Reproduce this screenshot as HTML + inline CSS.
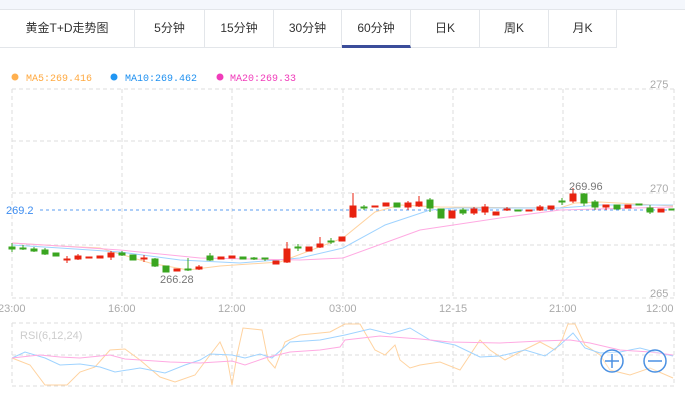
<!DOCTYPE html>
<html><head><meta charset="utf-8"><style>
body{margin:0;width:685px;height:403px;background:#fff;overflow:hidden;font-family:"Liberation Sans","Noto Sans CJK SC",sans-serif}
.top{position:absolute;left:0;top:0;width:685px;height:9px;background:#f4f7fc;border-bottom:1px solid #e3e6ea}
.tabs{position:absolute;left:0;top:10px;height:37px;width:617px;border-bottom:1px solid #e3e6ea}
.tab{position:absolute;top:0;height:37px;line-height:37px;text-align:center;font-size:12px;color:#333;border-right:1px solid #e3e6ea;box-sizing:border-box}
.act{border-bottom:3px solid #3b4d9a;height:38px}
svg{position:absolute;left:0;top:0}
</style></head><body>
<div class="top"></div>
<div class="tabs">
<div class="tab" style="left:0;width:135px">黄金T+D走势图</div>
<div class="tab" style="left:135px;width:70px">5分钟</div>
<div class="tab" style="left:205px;width:69px">15分钟</div>
<div class="tab" style="left:274px;width:68px">30分钟</div>
<div class="tab act" style="left:342px;width:69px">60分钟</div>
<div class="tab" style="left:411px;width:69px">日K</div>
<div class="tab" style="left:480px;width:69px">周K</div>
<div class="tab" style="left:549px;width:68px">月K</div>
</div>
<svg width="685" height="403" viewBox="0 0 685 403">
<g font-family="Liberation Mono, monospace" font-size="10">
<circle cx="15" cy="77" r="3.5" fill="#ffb04f"/><text x="26" y="81" fill="#ffa940">MA5:269.416</text>
<circle cx="114" cy="77" r="3.5" fill="#2196f3"/><text x="125" y="81" fill="#1e90f0">MA10:269.462</text>
<circle cx="220" cy="77" r="3.5" fill="#f03cba"/><text x="230" y="81" fill="#f03cba">MA20:269.33</text>
</g>
<g stroke="#ddd" stroke-dasharray="4,3" fill="none" stroke-width="1">
<line x1="12" y1="89" x2="674" y2="89"/><line x1="12" y1="141" x2="674" y2="141"/><line x1="12" y1="193" x2="674" y2="193"/><line x1="12" y1="245" x2="674" y2="245"/><line x1="12" y1="298" x2="674" y2="298"/>
<line x1="12" y1="89" x2="12" y2="298"/><line x1="122" y1="89" x2="122" y2="298"/><line x1="232" y1="89" x2="232" y2="298"/><line x1="343" y1="89" x2="343" y2="298"/><line x1="453" y1="89" x2="453" y2="298"/><line x1="563" y1="89" x2="563" y2="298"/><line x1="674" y1="89" x2="674" y2="298"/>
<line x1="12" y1="323" x2="674" y2="323"/><line x1="12" y1="355" x2="674" y2="355"/><line x1="12" y1="386" x2="674" y2="386"/>
<line x1="12" y1="323" x2="12" y2="386"/><line x1="122" y1="323" x2="122" y2="386"/><line x1="232" y1="323" x2="232" y2="386"/><line x1="343" y1="323" x2="343" y2="386"/><line x1="453" y1="323" x2="453" y2="386"/><line x1="563" y1="323" x2="563" y2="386"/><line x1="674" y1="323" x2="674" y2="386"/>
</g>
<g font-size="11" fill="#aaa" font-family="Liberation Sans, sans-serif">
<text x="650" y="88">275</text><text x="650" y="192">270</text><text x="650" y="297">265</text>
<text x="-2" y="312">23:00</text><text x="108" y="312">16:00</text><text x="218" y="312">12:00</text><text x="329" y="312">03:00</text><text x="439" y="312">12-15</text><text x="549" y="312">21:00</text><text x="646" y="312">12:00</text>
<text x="20" y="339" fill="#ccc">RSI(6,12,24)</text>
</g>
<line x1="40" y1="210" x2="674" y2="210" stroke="#5b9cf0" stroke-dasharray="3,3"/>
<text x="6" y="214" font-size="11" fill="#3c8cf0">269.2</text>
<g fill="none" stroke-width="1">
<polyline stroke="#ffd3a0" points="12,243 60,246 100,248 150,263 188,270 220,266 280,262 343,238 375,212 400,205 440,207 560,208 575,203 600,202 673,206"/>
<polyline stroke="#9fd3ff" points="12,245 60,248 120,252 180,260 240,263 300,258 343,248 385,225 430,210 455,208 560,208 600,205 673,205"/>
<polyline stroke="#ffaae2" points="12,243 60,246 120,250 200,258 300,260 343,258 420,230 500,218 560,210 673,207"/>
</g>
<g stroke-width="1">
<g stroke="#3aa520" fill="#3aa520">
<line x1="12" y1="243" x2="12" y2="252"/><rect x="9" y="247" width="6" height="2"/>
<line x1="23" y1="245" x2="23" y2="250"/><rect x="20" y="248" width="6" height="1"/>
<line x1="34" y1="247" x2="34" y2="252"/><rect x="31" y="249" width="6" height="2"/>
<line x1="45" y1="248" x2="45" y2="255"/><rect x="42" y="250" width="6" height="4"/>
<rect x="53" y="253" width="6" height="3"/>
<line x1="122" y1="251" x2="122" y2="256"/><rect x="119" y="253" width="6" height="2"/>
<rect x="130" y="255" width="6" height="5"/>
<line x1="155" y1="258" x2="155" y2="267"/><rect x="152" y="259" width="6" height="7"/>
<rect x="163" y="266" width="6" height="6"/>
<line x1="188" y1="258" x2="188" y2="271"/><rect x="185" y="269" width="6" height="1"/>
<line x1="210" y1="253" x2="210" y2="261"/><rect x="207" y="256" width="6" height="4"/>
<rect x="240" y="257" width="6" height="2"/>
<line x1="254" y1="257" x2="254" y2="260"/><rect x="251" y="258" width="6" height="1"/>
<line x1="265" y1="258" x2="265" y2="261"/><rect x="262" y="258" width="6" height="1"/>
<line x1="298" y1="244" x2="298" y2="251"/><rect x="295" y="247" width="6" height="1"/>
<line x1="331" y1="238" x2="331" y2="244"/><rect x="328" y="241" width="6" height="1"/>
<line x1="364" y1="205" x2="364" y2="210"/><rect x="361" y="207" width="6" height="1"/>
<rect x="394" y="203" width="6" height="4"/>
<line x1="430" y1="198" x2="430" y2="212"/><rect x="427" y="200" width="6" height="8"/>
<rect x="438" y="209" width="6" height="9"/>
<line x1="463" y1="208" x2="463" y2="215"/><rect x="460" y="210" width="6" height="3"/>
<rect x="515" y="210" width="6" height="1"/>
<line x1="562" y1="198" x2="562" y2="205"/><rect x="559" y="201" width="6" height="1"/>
<line x1="584" y1="193" x2="584" y2="206"/><rect x="581" y="194" width="6" height="9"/>
<line x1="595" y1="200" x2="595" y2="210"/><rect x="592" y="202" width="6" height="5"/>
<rect x="614" y="205" width="6" height="4"/>
<rect x="636" y="204" width="6" height="1"/>
<line x1="650" y1="205" x2="650" y2="214"/><rect x="647" y="208" width="6" height="4"/>
<rect x="669" y="209" width="5" height="1"/>
</g>
<g stroke="#e8220f" fill="#e8220f">
<line x1="67" y1="256" x2="67" y2="263"/><rect x="64" y="259" width="6" height="1"/>
<line x1="78" y1="254" x2="78" y2="260"/><rect x="75" y="256" width="6" height="3"/>
<rect x="86" y="257" width="6" height="1"/>
<rect x="97" y="256" width="6" height="2"/>
<line x1="111" y1="251" x2="111" y2="260"/><rect x="108" y="253" width="6" height="4"/>
<line x1="144" y1="255" x2="144" y2="262"/><rect x="141" y="258" width="6" height="1"/>
<rect x="174" y="269" width="6" height="2"/>
<line x1="199" y1="265" x2="199" y2="270"/><rect x="196" y="267" width="6" height="2"/>
<rect x="218" y="257" width="6" height="2"/>
<rect x="229" y="256" width="6" height="2"/>
<rect x="273" y="261" width="6" height="3"/>
<line x1="287" y1="242" x2="287" y2="263"/><rect x="284" y="249" width="6" height="13"/>
<rect x="306" y="247" width="6" height="4"/>
<line x1="320" y1="237" x2="320" y2="248"/><rect x="317" y="244" width="6" height="3"/>
<rect x="339" y="237" width="6" height="4"/>
<line x1="353" y1="193" x2="353" y2="218"/><rect x="350" y="206" width="6" height="11"/>
<rect x="372" y="206" width="6" height="1"/>
<rect x="383" y="203" width="6" height="3"/>
<line x1="408" y1="201" x2="408" y2="210"/><rect x="405" y="203" width="6" height="4"/>
<line x1="419" y1="196" x2="419" y2="207"/><rect x="416" y="202" width="6" height="4"/>
<rect x="449" y="211" width="6" height="7"/>
<line x1="474" y1="207" x2="474" y2="215"/><rect x="471" y="209" width="6" height="4"/>
<line x1="485" y1="204" x2="485" y2="215"/><rect x="482" y="207" width="6" height="5"/>
<rect x="493" y="212" width="6" height="3"/>
<line x1="507" y1="207" x2="507" y2="211"/><rect x="504" y="209" width="6" height="1"/>
<rect x="526" y="210" width="6" height="1"/>
<line x1="540" y1="205" x2="540" y2="211"/><rect x="537" y="207" width="6" height="3"/>
<rect x="548" y="206" width="6" height="3"/>
<line x1="573" y1="188" x2="573" y2="203"/><rect x="570" y="194" width="6" height="7"/>
<line x1="606" y1="205" x2="606" y2="210"/><rect x="603" y="205" width="6" height="2"/>
<rect x="625" y="205" width="6" height="3"/>
<rect x="658" y="209" width="6" height="3"/>
</g>
</g>
<text x="160" y="283" font-size="11" fill="#777">266.28</text>
<text x="569" y="190" font-size="11" fill="#777">269.96</text>
<g fill="none" stroke-width="1">
<polyline stroke="#ffd3a0" points="12,358 30,365 45,385 67,385 80,372 95,367 110,350 125,349 140,360 160,377 175,382 195,375 210,355 220,342 227,358 232,385 237,355 243,328 262,330 268,360 275,368 285,342 300,335 330,332 345,324 360,324 375,350 385,355 395,345 400,360 410,368 420,365 440,362 460,370 470,355 480,340 490,350 505,360 520,352 540,342 555,350 562,340 568,324 575,324 585,345 600,355 610,370 630,375 650,368 673,378"/>
<polyline stroke="#9fd3ff" points="12,358 25,352 45,358 60,365 80,364 100,367 115,372 140,368 165,373 185,365 200,360 210,354 232,355 245,358 260,354 272,358 290,342 320,340 345,335 370,329 390,334 410,328 430,340 445,343 455,345 480,357 500,356 525,350 545,356 560,345 573,333 585,348 600,353 620,352 640,348 655,352 673,356"/>
<polyline stroke="#ffaae2" points="12,358 30,356 40,355 60,357 80,358 100,356 110,355 125,359 140,360 170,362 200,363 232,361 245,365 265,358 290,352 320,350 340,347 345,340 380,336 420,339 450,342 500,343 540,341 570,340 590,343 620,350 650,352 673,355"/>
</g>
<g stroke="#4a90e2" stroke-width="1.5" fill="rgba(255,255,255,0.3)">
<circle cx="612" cy="361" r="11"/><line x1="605" y1="361" x2="619" y2="361"/><line x1="612" y1="354" x2="612" y2="368"/>
<circle cx="655" cy="361" r="11"/><line x1="648" y1="361" x2="662" y2="361"/>
</g>
</svg>
</body></html>
